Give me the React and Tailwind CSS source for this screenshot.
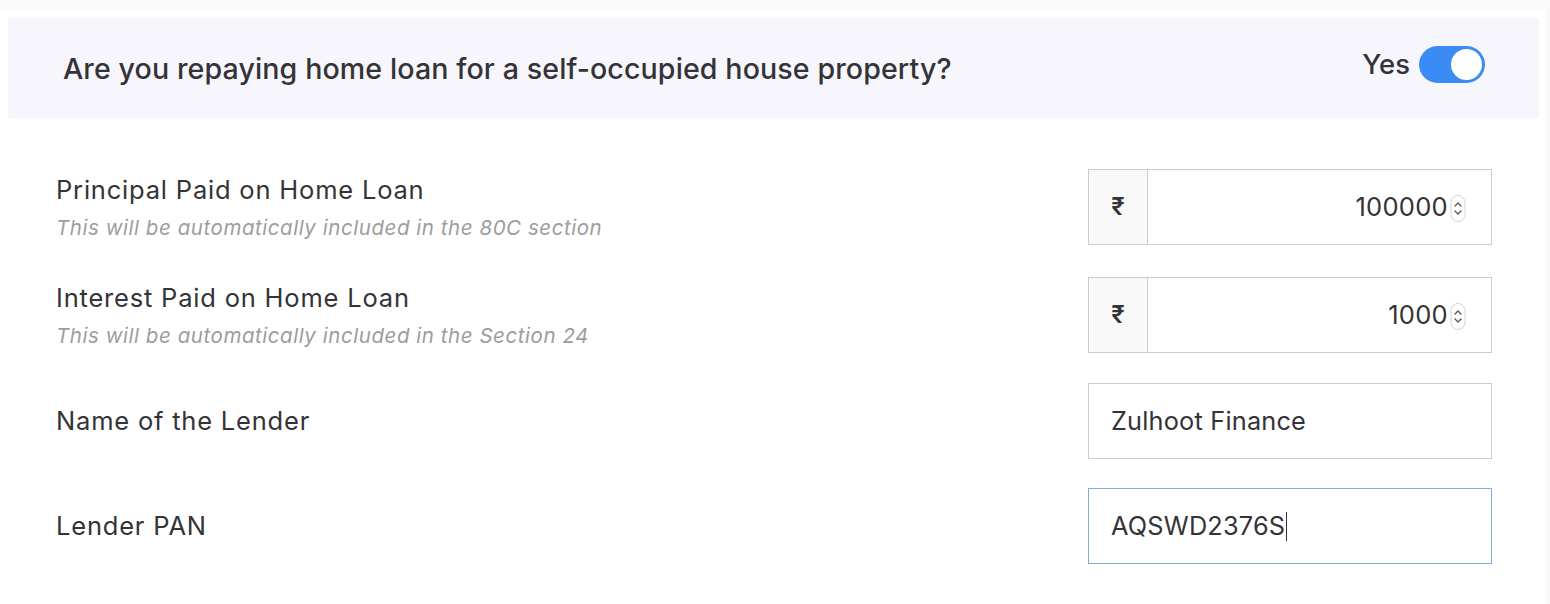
export default function App() {
  const rows = [
    {
      id: 1,
      label: "Principal Paid on Home Loan",
      hint: "This will be automatically included in the 80C section",
      value: "100000",
      currency: true,
      gap: "mt-[51px]"
    },
    {
      id: 2,
      label: "Interest Paid on Home Loan",
      hint: "This will be automatically included in the Section 24",
      value: "1000",
      currency: true,
      gap: "mt-8"
    },
    {
      id: 3,
      label: "Name of the Lender",
      value: "Zulhoot Finance",
      gap: "mt-[30px]"
    },
    {
      id: 4,
      label: "Lender PAN",
      value: "AQSWD2376S",
      focused: true,
      gap: "mt-[29px]"
    }
  ];

  return (
    <div className="min-h-[604px] bg-[#fafafa] pt-[10px] pr-[5px] font-['Inter','Noto_Sans',sans-serif] text-[#333338]">
      <div className="bg-white pl-2 pr-[6px] pt-2 pb-10 min-h-[594px]">
        {/* Question banner */}
        <div className="flex items-center justify-between h-[100px] bg-[#f8f6fd] pl-[55px] pr-[54px]">
          <h2 className="text-[28.6px] font-medium tracking-[0.1px] mt-[3px]">
            Are you repaying home loan for a self-occupied house property?
          </h2>
          <div className="flex items-center gap-[9px] -mt-[7px]">
            <span className="text-[27.5px] font-medium">Yes</span>
            <div className="flex items-center justify-end w-[66px] h-[37px] rounded-full bg-[#3a8bf4] pr-[3px]">
              <div className="w-[31px] h-[31px] rounded-full bg-white"></div>
            </div>
          </div>
        </div>

        {/* Form rows */}
        {rows.map((row) => (
          <div key={row.id} className={`flex items-center justify-between pl-12 pr-[47px] ${row.gap}`}>
            <div className={row.hint ? "mt-[2px]" : ""}>
              <p className="text-[25.5px] leading-[30px] tracking-[0.8px]">{row.label}</p>
              {row.hint && (
                <p className="text-[20.5px] italic text-[#9d9d9d] mt-[10px] leading-[26px] tracking-[0.55px]">{row.hint}</p>
              )}
            </div>
            <div
              className={`flex w-[404px] h-[76px] border ${
                row.focused ? "border-[#7caee0]" : "border-[#cccccc]"
              }`}
            >
              {row.currency ? (
                <>
                  <div className="flex items-center justify-center w-[59px] bg-[#f9f9f9] border-r border-[#cccccc] text-[24px] font-semibold">
                    ₹
                  </div>
                  <div className="flex flex-1 items-center justify-end pr-[25px] text-[25.5px] tracking-[0.3px]">
                    <span>{row.value}</span>
                    <svg className="ml-[2px] mt-[2px]" width="16" height="27" viewBox="0 0 16 27">
                      <rect x="1" y="0.5" width="14" height="26" rx="7" fill="white" stroke="#d4d4d4" />
                      <path d="M5 11l3-3 3 3" fill="none" stroke="#555" strokeWidth="1.3" strokeLinecap="round" strokeLinejoin="round" />
                      <path d="M5 16l3 3 3-3" fill="none" stroke="#555" strokeWidth="1.3" strokeLinecap="round" strokeLinejoin="round" />
                    </svg>
                  </div>
                </>
              ) : (
                <div className="flex flex-1 items-center pl-[22px] text-[25.3px] tracking-[0.2px]">
                  <span>{row.value}</span>
                  {row.focused && <span className="w-px h-[29px] bg-[#333] ml-px"></span>}
                </div>
              )}
            </div>
          </div>
        ))}
      </div>
    </div>
  );
}
